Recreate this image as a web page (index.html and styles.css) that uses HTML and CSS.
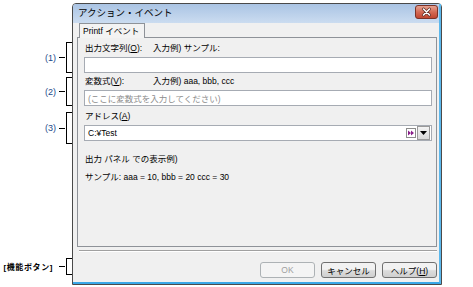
FILE: index.html
```html
<!DOCTYPE html>
<html lang="ja">
<head>
  <meta charset="UTF-8">
  <title>アクション・イベント</title>
  <link rel="stylesheet" href="styles.css">
</head>
<body>

  <div class="page">

    <!-- Callout labels on the left -->
    <div class="notes">
      <div class="note note-1"><span class="note-label">(1)</span><span class="dash"></span><span class="brace"></span></div>
      <div class="note note-2"><span class="note-label">(2)</span><span class="dash"></span><span class="brace"></span></div>
      <div class="note note-3"><span class="note-label">(3)</span><span class="dash"></span><span class="brace"></span></div>
      <div class="note note-4"><span class="note-label note-label-btn">[機能ボタン]</span><span class="dash"></span><span class="brace"></span></div>
    </div>

    <!-- Dialog window -->
    <div class="window">
      <div class="frame">
        <div class="titlebar">
          <span class="title">アクション・イベント</span>
          <span class="close-btn">
            <svg width="23" height="14" viewBox="0 0 23 14">
              <defs>
                <linearGradient id="closeGrad" x1="0" y1="0" x2="0" y2="1">
                  <stop offset="0" stop-color="#e8a898"/>
                  <stop offset="0.5" stop-color="#d46a55"/>
                  <stop offset="1" stop-color="#c0442e"/>
                </linearGradient>
              </defs>
              <rect x="0.5" y="0.5" width="22" height="13" rx="2.5" fill="url(#closeGrad)" stroke="#7b3328"/>
              <path d="M8.5 4 L14.5 10 M14.5 4 L8.5 10" stroke="#5a2a22" stroke-width="3" stroke-linecap="round"/>
              <path d="M8.5 4 L14.5 10 M14.5 4 L8.5 10" stroke="#fff" stroke-width="1.6" stroke-linecap="round"/>
            </svg>
          </span>
        </div>

        <div class="client">
          <div class="tabs">
            <div class="tab">Printf イベント</div>
          </div>

          <div class="panel">
            <div class="row-label row-1">
              <span class="lbl">出力文字列(<u>O</u>):</span>
              <span class="hint">入力例) サンプル:</span>
            </div>
            <div class="field field-1"></div>

            <div class="row-label row-2">
              <span class="lbl">変数式(<u>V</u>):</span>
              <span class="hint">入力例) aaa, bbb, ccc</span>
            </div>
            <div class="field field-2"><span class="placeholder">(ここに変数式を入力してください)</span></div>

            <div class="row-label row-3">
              <span class="lbl">アドレス(<u>A</u>)</span>
            </div>
            <div class="field field-3">
              <span class="value">C:¥Test</span>
              <span class="jump-btn">
                <svg width="10" height="10" viewBox="0 0 10 10">
                  <rect x="0.5" y="0.5" width="9" height="9" fill="#fff" stroke="#8c8c8c"/>
                  <path d="M2 2.5 L5 5 L2 7.5 Z M5 2.5 L8 5 L5 7.5 Z" fill="#8a1f8a"/>
                </svg>
              </span>
              <span class="drop-btn">
                <svg width="7" height="4" viewBox="0 0 7 4"><path d="M0 0 H7 L3.5 4 Z" fill="#000"/></svg>
              </span>
            </div>

            <div class="text-line line-1">出力 パネル での表示例)</div>
            <div class="text-line line-2">サンプル: aaa = 10, bbb = 20 ccc = 30</div>
          </div>

          <div class="separator"></div>

          <div class="buttons">
            <button class="btn" disabled>OK</button>
            <button class="btn">キャンセル</button>
            <button class="btn">ヘルプ(<u>H</u>)</button>
          </div>
        </div>
      </div>
    </div>

  </div>

</body>
</html>
```

FILE: styles.css
```css
/* General */
body {
  margin: 0;
  background-color: #fff;
  font-family: "Liberation Sans", "Noto Sans CJK JP", sans-serif;
  font-size: 8.5px;
  color: #000;
}

.page {
  display: flex;
  align-items: flex-start;
}

/* Callout labels */
.notes {
  width: 72px;
  padding-top: 42px;
  display: flex;
  flex-direction: column;
}

.note {
  display: flex;
  align-items: center;
  justify-content: flex-end;
}

.note-1 { height: 31px; }
.note-2 { height: 29px; margin-top: 4px; }
.note-3 { height: 32px; margin-top: 6px; }
.note-4 { height: 17px; margin-top: 114px; }

.note-label {
  color: #1d4b8c;
  font-size: 9px;
}

.note-label-btn {
  color: #000;
  font-weight: bold;
  font-size: 8px;
  letter-spacing: 0.6px;
  margin-right: 3px;
}

.dash {
  width: 6px;
  height: 1px;
  background-color: #000;
  margin: 0 1px 0 3px;
}

.brace {
  width: 6px;
  height: 100%;
  box-sizing: border-box;
  border: 1px solid #000;
  border-right: none;
}

/* Window */
.window {
  margin-top: 3px;
  width: 370px;
  height: 282px;
  box-sizing: border-box;
  border: 1px solid #4a4a4a;
  border-radius: 4px 4px 0 0;
  background-color: #f0f0f0;
}

.frame {
  height: 100%;
  box-sizing: border-box;
  border-right: 2px solid #5cb8ec;
  border-bottom: 2px solid #3aa8e8;
  display: flex;
  flex-direction: column;
}

.titlebar {
  height: 19px;
  display: flex;
  align-items: flex-start;
  justify-content: space-between;
  background: linear-gradient(#aac4e4, #cbdcf0);
  border-radius: 3px 3px 0 0;
}

.title {
  padding-left: 5px;
  line-height: 17px;
  font-size: 9.5px;
}

.close-btn {
  margin: 1px 1px 0 0;
  height: 14px;
}

.close-btn svg {
  display: block;
}

.client {
  flex: 1;
  padding: 0 2px 0 4px;
  display: flex;
  flex-direction: column;
}

/* Tab */
.tabs {
  display: flex;
  padding-left: 2px;
}

.tab {
  position: relative;
  z-index: 1;
  height: 15px;
  box-sizing: border-box;
  margin-bottom: -1px;
  padding: 0 5px 0 3px;
  border: 1px solid #8e9298;
  border-bottom: none;
  background-color: #f3f3f3;
  line-height: 14px;
}

.panel {
  height: 210px;
  box-sizing: border-box;
  border: 1px solid #8e9298;
  background-color: #f0f0f0;
  padding: 0 4px 0 6px;
  display: flex;
  flex-direction: column;
}

.row-label {
  display: flex;
  height: 12px;
  line-height: 12px;
  padding-left: 1px;
}

.lbl {
  width: 68px;
}

.row-1 { margin-top: 4px; }
.row-2 { margin-top: 2px; }
.row-3 { margin-top: 4px; }

.field {
  height: 16px;
  box-sizing: border-box;
  margin-top: 3px;
  border: 1px solid #a6abb3;
  background-color: #fff;
  display: flex;
  align-items: center;
  padding-left: 3px;
}

.placeholder {
  color: #8c8c8c;
}

.field-3 {
  padding-right: 1px;
}

.value {
  flex: 1;
}

.jump-btn {
  height: 10px;
  margin-right: 1px;
}

.jump-btn svg {
  display: block;
}

.drop-btn {
  width: 13px;
  height: 14px;
  box-sizing: border-box;
  border: 1px solid #9a9a9a;
  background: linear-gradient(#f4f4f4, #d8d8d8);
  display: flex;
  align-items: center;
  justify-content: center;
}

.text-line {
  height: 12px;
  line-height: 12px;
  padding-left: 1px;
}

.line-1 { margin-top: 12px; }
.line-2 { margin-top: 6px; }

/* Bottom */
.separator {
  margin: 3px 0 0 2px;
  border-top: 1px solid #a0a0a0;
  border-bottom: 1px solid #fff;
}

.buttons {
  margin-top: 10px;
  display: flex;
  justify-content: flex-end;
  gap: 6px;
}

.btn {
  width: 55px;
  height: 16px;
  padding: 0;
  font-family: "Liberation Sans", "Noto Sans CJK JP", sans-serif;
  font-size: 8.5px;
  color: #000;
  border: 1px solid #707070;
  border-radius: 3px;
  background: linear-gradient(#f2f2f2 45%, #dcdcdc 55%, #cfcfcf);
}

.btn:disabled {
  color: #a0a0a0;
  border-color: #adb2b5;
  background: #f4f4f4;
}
```
